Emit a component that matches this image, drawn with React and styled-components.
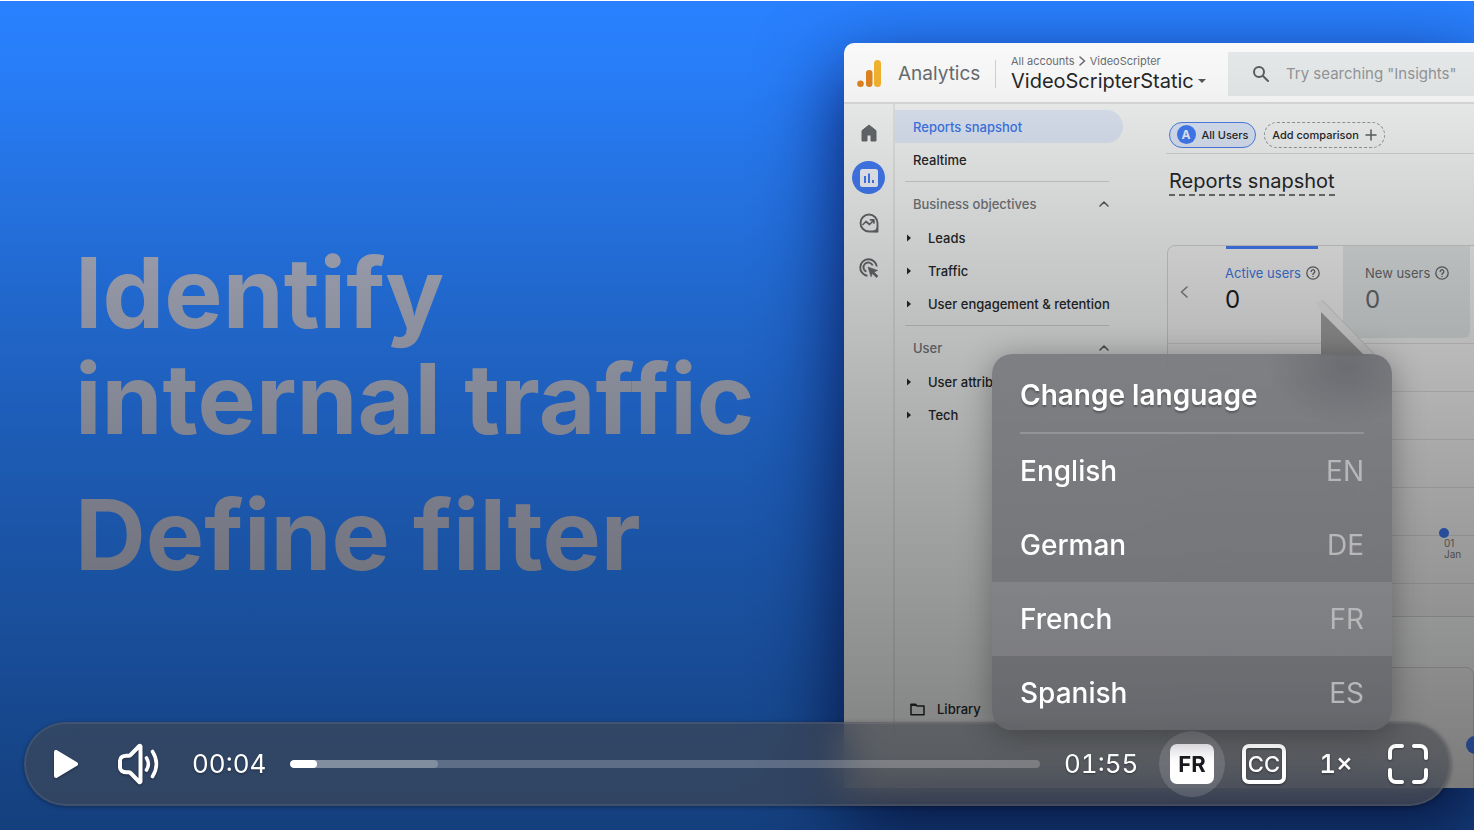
import React from 'react';
import styled, { createGlobalStyle } from 'styled-components';

const GlobalStyle = createGlobalStyle`
  * { box-sizing: border-box; }
  body { margin: 0; background: #fff; font-family: Inter, "Liberation Sans", sans-serif; }
  button { font: inherit; color: inherit; background: none; border: 0; padding: 0; margin: 0; cursor: pointer; }
  h1, h2, p, ul { margin: 0; padding: 0; font-weight: inherit; list-style: none; }
  a { color: inherit; text-decoration: none; }
  svg { display: block; flex: none; }
`;

/* ---------- player shell ---------- */
const Player = styled.main`
  position: relative;
  width: calc(100% - 4px);
  margin-top: 1px;
  aspect-ratio: 16 / 9;
  overflow: hidden;
`;

const Scene = styled.section`
  display: grid;
  grid-template-columns: 844fr 630fr;
  height: 100%;
  padding-top: 42px;
  overflow: hidden;
  background: #2981ff;
  &::after {
    content: '';
    position: absolute;
    inset: 0;
    pointer-events: none;
    background: linear-gradient(180deg, rgba(0,0,0,0) 0%, rgba(0,0,0,0.03) 9%, rgba(0,0,0,0.1) 20%,
      rgba(0,0,0,0.2) 36%, rgba(0,0,0,0.3) 55%, rgba(0,0,0,0.37) 70%, rgba(0,0,0,0.44) 85%, rgba(0,0,0,0.51) 100%);
  }
`;

const Headline = styled.h1`
  padding: 197px 0 0 75px;
  font-weight: 700;
  font-size: 98px;
  line-height: 106px;
  color: #b4b8ca;
  white-space: nowrap;
`;
const HeadlineLine = styled.span`
  display: block;
  margin-top: ${(p) => (p.$gap ? '30px' : '0')};
`;

/* ---------- analytics window ---------- */
const Window = styled.article`
  display: flex;
  flex-direction: column;
  height: 745px;
  min-width: 0;
  overflow: hidden;
  border-top-left-radius: 10px;
  background: #fdfdfd;
  color: #26282a;
  white-space: nowrap;
`;
const WindowShadow = styled.div`
  min-width: 0;
  height: 745px;
  border-radius: 10px;
  box-shadow: 0 30px 80px 4px rgba(0, 0, 64, 0.75);
`;
const TopBar = styled.header`
  display: flex;
  align-items: center;
  height: 61px;
  flex: none;
  padding: 2px 0 0 12px;
  border-bottom: 2px solid #dedede;
`;
const Brand = styled.span`
  width: 98px;
  margin-left: 16px;
  font-size: 19px;
  line-height: 28px;
  color: #696c70;
  border-right: 1px solid #d4d4d4;
`;
const Account = styled.div`
  width: 217px;
  padding-left: 15px;
`;
const Crumbs = styled.p`
  display: flex;
  align-items: center;
  gap: 4px;
  font-size: 11px;
  line-height: 14px;
  color: #6c6f73;
`;
const Property = styled.button`
  display: flex;
  align-items: center;
  gap: 4px;
  font-size: 20px;
  line-height: 26px;
`;
const SearchBox = styled.label`
  display: flex;
  align-items: center;
  gap: 16px;
  flex: 1;
  min-width: 0;
  height: 44px;
  margin-left: 15px;
  padding-left: 24px;
  background: #e9ecec;
  color: #5b5e62;
`;
const SearchInput = styled.input`
  flex: 1;
  min-width: 0;
  border: 0;
  padding: 0;
  outline: 0;
  background: none;
  font: 15px/20px Inter, sans-serif;
  &::placeholder { color: #94979a; opacity: 1; }
`;
const WindowBody = styled.div`
  display: flex;
  flex: 1;
  min-height: 0;
  background: #f2f4f3;
`;
const Rail = styled.nav`
  display: flex;
  flex-direction: column;
  align-items: center;
  gap: 12px;
  width: 51px;
  flex: none;
  padding-top: 12px;
  border-right: 2px solid #e2e4e3;
  color: #66696d;
`;
const RailButton = styled.button`
  display: grid;
  place-items: center;
  width: 33px;
  height: 33px;
  border-radius: 50%;
  background: ${(p) => (p.$active ? '#437cf5' : 'none')};
`;
const Side = styled.nav`
  display: flex;
  flex-direction: column;
  width: 228px;
  flex: none;
  padding: 6px 0 71px;
  font-size: 13px;
  font-weight: 500;
`;
const SideLink = styled.a`
  display: flex;
  align-items: center;
  height: 33px;
  flex: none;
  padding-left: 18px;
  border-radius: 0 17px 17px 0;
  color: ${(p) => (p.$active ? '#3d77e8' : 'inherit')};
  background: ${(p) => (p.$active ? '#dde5f4' : 'none')};
`;
const Rule = styled.hr`
  width: 204px;
  flex: none;
  margin: 5px 0 5px 10px;
  border: 0;
  border-top: 1px solid #cfd1d0;
`;
const Group = styled.button`
  display: flex;
  align-items: center;
  justify-content: space-between;
  height: 34px;
  flex: none;
  padding: 0 14px 0 18px;
  color: #73767a;
`;
const TreeItem = styled.button`
  display: flex;
  align-items: center;
  gap: 17px;
  height: 33px;
  flex: none;
  padding-left: 12px;
`;
const Library = styled.a`
  display: flex;
  align-items: center;
  gap: 12px;
  margin-top: auto;
  padding-left: 15px;
`;
const Report = styled.div`
  flex: 1;
  min-width: 0;
  padding: 0 0 0 43px;
`;
const Chips = styled.div`
  display: flex;
  align-items: center;
  gap: 8px;
  height: 50px;
  padding: 12px 0 0 3px;
  border-bottom: 1px solid #d5d7d6;
  font-size: 11px;
  font-weight: 500;
`;
const Chip = styled.button`
  display: flex;
  align-items: center;
  justify-content: center;
  gap: 6px;
  width: ${(p) => (p.$dashed ? '121px' : '87px')};
  height: 26px;
  border-radius: 13px;
  border: ${(p) => (p.$dashed ? '1px dashed #95989b' : '1px solid #4c80e8')};
  background: ${(p) => (p.$dashed ? 'none' : '#dce5f6')};
`;
const Avatar = styled.span`
  width: 19px;
  height: 19px;
  border-radius: 50%;
  background: #437cf5;
  color: #e9effc;
  font-size: 12px;
  font-weight: 700;
  line-height: 19px;
`;
const ReportTitle = styled.h2`
  display: inline-block;
  margin: 15px 0 0 3px;
  border-bottom: 2px dashed #6e7174;
  font-size: 20px;
  line-height: 25px;
`;
const Card = styled.section`
  height: 372px;
  margin: 49px -8px 0 1px;
  border: 1px solid #d1d1d1;
  border-radius: 8px;
  background: linear-gradient(#f2f2f2, #eeeeee);
`;
const Metrics = styled.div`
  display: flex;
  height: 92px;
  align-items: stretch;
`;
const Prev = styled.button`
  width: 32px;
  flex: none;
  display: grid;
  place-items: center;
  color: #7f8285;
`;
const Metric = styled.div`
  flex: none;
  width: ${(p) => (p.$muted ? '127px' : '143px')};
  padding: 15px 0 0 ${(p) => (p.$muted ? '22px' : '25px')};
  border-radius: ${(p) => (p.$muted ? '0 0 6px 0' : '0')};
  font-size: 13px;
  line-height: 24px;
  color: ${(p) => (p.$muted ? '#66696b' : '#3d77e0')};
  background: ${(p) => (p.$muted ? '#dee2e3' : 'linear-gradient(#437cf5,#437cf5) 26px 0 / 92px 3px no-repeat')};
`;
const MetricName = styled.p`
  display: flex;
  align-items: center;
  gap: 5px;
  svg { color: #626466; }
`;
const MetricValue = styled.p`
  font-size: 24px;
  line-height: 30px;
  color: ${(p) => (p.$muted ? '#66696b' : '#1c1d1e')};
`;
const Chart = styled.div`
  position: relative;
  height: 272px;
  margin-top: 5px;
  background: repeating-linear-gradient(#d9d9d9 0 1px, transparent 1px 48px);
`;
const Callout = styled.svg`
  position: absolute;
  left: 148px;
  top: -45px;
`;
const Tick = styled.div`
  position: absolute;
  right: 18px;
  top: 191px;
  width: 24px;
  padding-left: 5px;
  font-size: 10px;
  line-height: 11px;
  color: #77797b;
  white-space: pre-line;
`;
const Dot = styled.span`
  display: block;
  width: 10px;
  height: 10px;
  margin: -6px 0 0 -5px;
  border-radius: 50%;
  background: #3c74ea;
`;
const LowerCard = styled.section`
  display: flex;
  justify-content: flex-end;
  height: 140px;
  margin: 50px 0 0 1px;
  padding-top: 68px;
  border: 1px solid #d1d1d1;
  border-radius: 8px;
  background: #f0f0f0;
`;
const Badge = styled.span`
  width: 18px;
  height: 18px;
  margin-right: -11px;
  border-radius: 50%;
  background: #437cf5;
`;

/* ---------- control bar ---------- */
const ControlBar = styled.div`
  position: absolute;
  left: 24px;
  right: 23px;
  bottom: 24px;
  display: flex;
  align-items: center;
  height: 84px;
  padding: 0 8px 0 22px;
  border-radius: 42px;
  border: 2px solid rgba(255, 255, 255, 0.07);
  background: rgba(68, 71, 79, 0.6);
  backdrop-filter: blur(20px);
  box-shadow: 0 1px 4px rgba(0, 0, 0, 0.35);
  color: #fff;
`;
const IconButton = styled.button`
  display: grid;
  place-items: center;
  width: ${(p) => p.$w || 66}px;
  height: 66px;
  flex: none;
  border-radius: 33px;
  background: ${(p) => (p.$active ? 'rgba(255,255,255,0.14)' : 'none')};
  filter: ${(p) => (p.$active ? 'none' : 'drop-shadow(0 1px 1px rgba(0, 0, 0, 0.4))')};
`;
const Options = styled.div`
  display: flex;
  gap: 6px;
  flex: none;
  margin-left: 19px;
`;
const Time = styled.time`
  width: 76px;
  flex: none;
  font-size: 26px;
  font-variant-numeric: tabular-nums;
  line-height: 32px;
  text-shadow: 0 1px 2px rgba(0, 0, 0, 0.4);
`;
const Track = styled.div`
  flex: 1;
  min-width: 0;
  display: flex;
  height: 8px;
  margin: 0 24px 0 22px;
  border-radius: 4px;
  overflow: hidden;
  background: rgba(255, 255, 255, 0.22);
`;
const Buffered = styled.div`
  border-radius: 4px;
  background: rgba(255, 255, 255, 0.22);
`;
const Played = styled.div`
  height: 8px;
  border-radius: 4px;
  background: #fff;
`;
const LangTile = styled.span`
  width: 44px;
  height: 40px;
  border-radius: 7px;
  background: linear-gradient(#eceaee, #fff 40%);
  color: #1b1b1d;
  font-size: 22px;
  font-weight: 700;
  line-height: 41px;
`;
const CaptionTile = styled.span`
  width: 44px;
  height: 40px;
  border: 4px solid #fff;
  border-radius: 7px;
  font-size: 22px;
  font-weight: 500;
  line-height: 33px;
  display: flex;
  justify-content: center;
`;
const Rate = styled.span`
  font-size: 26px;
  font-weight: 500;
  font-variant-numeric: tabular-nums;
  line-height: 32px;
`;

/* ---------- language menu ---------- */
const Menu = styled.section`
  position: absolute;
  right: 82px;
  bottom: 100px;
  width: 400px;
  border-radius: 20px;
  overflow: hidden;
  background:
    radial-gradient(ellipse 80px 60px at 355px 12px, rgba(80, 81, 86, 0.4), rgba(80, 81, 86, 0)),
    linear-gradient(rgba(114, 115, 120, 0.82), rgba(110, 111, 116, 0.84) 60%, rgba(98, 99, 104, 0.86));
  backdrop-filter: blur(24px);
  color: #fff;
  text-shadow: 0 1px 1px rgba(0, 0, 0, 0.2);
`;
const MenuShadow = styled.div`
  position: absolute;
  right: 82px;
  bottom: 100px;
  width: 400px;
  height: 376px;
  border-radius: 20px;
  box-shadow: 0 4px 32px rgba(0, 0, 0, 0.32);
`;
const MenuTitle = styled.h2`
  height: 80px;
  margin: 0 28px;
  border-bottom: 2px solid rgba(255, 255, 255, 0.18);
  font-size: 28px;
  font-weight: 600;
  line-height: 82px;
  text-shadow: 0 2px 2px rgba(0, 0, 0, 0.3);
`;
const MenuItem = styled.button`
  display: flex;
  align-items: center;
  justify-content: space-between;
  width: 100%;
  height: 74px;
  padding: 0 28px;
  font-size: 28px;
  font-weight: 500;
  background: ${(p) => (p.$active ? 'rgba(255,255,255,0.1)' : 'none')};
`;
const Code = styled.span`
  font-weight: 400;
  color: #b7b7b8;
`;

/* ---------- icons ---------- */
const stroke = { fill: 'none', stroke: 'currentColor', strokeLinecap: 'round', strokeLinejoin: 'round' };

const Logo = () => (
  <svg width="26" height="30" viewBox="0 0 26 30">
    <circle cx="4.500" cy="24.800" r="3.300" fill="#e28420" />
    <rect x="10" y="11" width="6.500" height="17" rx="3.200" fill="#e28420" />
    <rect x="18" y="1" width="7" height="27" rx="3.500" fill="#f5b52e" />
  </svg>
);
const HomeIcon = () => (
  <svg width="16" height="18" viewBox="0 0 16 18"><path d="M1 6.600 8 1l7 5.600V17h-5v-6H6v6H1z" fill="currentColor" stroke="currentColor" strokeLinejoin="round" /></svg>
);
const ReportsIcon = () => (
  <svg width="18" height="18" viewBox="0 0 18 18">
    <rect width="18" height="18" rx="2.500" fill="#f1f4fb" />
    <path d="M5 7v7M9 4.500V14M13 11v3" stroke="#437cf5" strokeWidth="2" />
  </svg>
);
const ExploreIcon = () => (
  <svg width="20" height="20" viewBox="0 0 20 20" {...stroke} strokeWidth="1.900">
    <path d="M10 18.500A8.500 8.500 0 1 1 18.500 10v8.500z" />
    <path d="m4 11.500 3-3 3.500 3 4-4M11.500 6.800h3.400v3.200" strokeWidth="1.700" />
    <path d="M14 18.500a6 6 0 0 0 4.500-4.500v4.500z" fill="currentColor" strokeWidth="1" />
  </svg>
);
const TargetIcon = () => (
  <svg width="20" height="20" viewBox="0 0 20 20" {...stroke} strokeWidth="1.900" strokeLinecap="butt">
    <path d="M8.500 17.800A8.300 8.300 0 1 1 17.800 8.500" />
    <path d="M7.400 13.700A4.800 4.800 0 1 1 13.700 7.400" />
    <path d="m9 9 9.600 3.400-3.600 1.600 4 4-1.600 1.600-4-4-1.400 3.200z" fill="currentColor" strokeWidth=".6" />
  </svg>
);
const SearchIcon = () => (
  <svg width="18" height="18" viewBox="0 0 18 18" {...stroke} strokeWidth="2"><circle cx="7" cy="7" r="5" /><path d="m11 11 5 5" /></svg>
);
const ChevronUp = () => (
  <svg width="10" height="8" viewBox="0 0 10 8" {...stroke} strokeWidth="1.600" color="#5d6062"><path d="m1 6 4-4 4 4" /></svg>
);
const ChevronRight = () => (
  <svg width="7" height="10" viewBox="0 0 7 10" {...stroke} strokeWidth="1.600"><path d="m1 1 4.500 4L1 9" /></svg>
);
const ChevronLeft = () => (
  <svg width="8" height="12" viewBox="0 0 8 12" {...stroke} strokeWidth="1.600"><path d="M7 1 1.500 6 7 11" /></svg>
);
const Caret = () => (
  <svg width="4" height="8" viewBox="0 0 4 8"><path d="M0 0.500 4 4 0 7.500z" fill="currentColor" /></svg>
);
const DownCaret = () => (
  <svg width="8" height="4" viewBox="0 0 8 4"><path d="M0 0h8L4 4z" fill="#55585b" /></svg>
);
const PlusIcon = () => (
  <svg width="12" height="12" viewBox="0 0 12 12" {...stroke} strokeWidth="1.500" color="#5d6062"><path d="M6 1v10M1 6h10" /></svg>
);
const HelpIcon = () => (
  <svg width="14" height="14" viewBox="0 0 14 14" {...stroke} strokeWidth="1.300">
    <circle cx="7" cy="7" r="6.200" />
    <path d="M5.200 5.500a1.800 1.800 0 1 1 2.700 1.600c-.7.400-.9.700-.9 1.300M7 10.300v.1" />
  </svg>
);
const FolderIcon = () => (
  <svg width="15" height="13" viewBox="0 0 15 13" {...stroke} strokeWidth="1.500"><path d="M1 1.200h4.500L7 3h7v8.800H1z" /><path d="M1 2.200h5" /></svg>
);
const PlayIcon = () => (
  <svg width="26" height="30" viewBox="0 0 26 30"><path d="M3 3v24L23 15z" fill="#fff" stroke="#fff" strokeWidth="4" strokeLinejoin="round" /></svg>
);
const VolumeIcon = () => (
  <svg width="42" height="42" viewBox="0 0 42 42" {...stroke} strokeWidth="4">
    <path d="M23.500 3.500v35c0 .7-.7 1-1.200.5L13.500 30c-.6-.6-1.200-.8-2-.8H9.500C6 29.200 3 27.500 3 24.500v-7c0-3 3-4.700 6.500-4.700h2c.8 0 1.400-.2 2-.8L22.300 3c.5-.5 1.200-.2 1.200.5z" />
    <path d="M29.500 15c2.500 4 2.500 8 0 12M35.500 8.500c5.200 8.300 5.200 16.700 0 25" strokeWidth="3.600" />
  </svg>
);
const FullscreenIcon = () => (
  <svg width="40" height="40" viewBox="0 0 40 40" {...stroke} strokeWidth="4">
    <path d="M14 2H8a6 6 0 0 0-6 6v6M26 2h6a6 6 0 0 1 6 6v6M38 26v6a6 6 0 0 1-6 6h-6M14 38H8a6 6 0 0 1-6-6v-6" />
  </svg>
);

const languages = [
  ['English', 'EN'],
  ['German', 'DE'],
  ['French', 'FR'],
  ['Spanish', 'ES'],
];

function AnalyticsWindow() {
  return (
    <Window>
      <TopBar>
        <Logo />
        <Brand>Analytics</Brand>
        <Account>
          <Crumbs>All accounts <ChevronRight /> VideoScripter</Crumbs>
          <Property>VideoScripterStatic <DownCaret /></Property>
        </Account>
        <SearchBox>
          <SearchIcon />
          <SearchInput type="search" aria-label="Search" placeholder={'Try searching "Insights"'} />
        </SearchBox>
      </TopBar>
      <WindowBody>
        <Rail aria-label="Sections">
          <RailButton aria-label="Home"><HomeIcon /></RailButton>
          <RailButton aria-label="Reports" $active><ReportsIcon /></RailButton>
          <RailButton aria-label="Explore"><ExploreIcon /></RailButton>
          <RailButton aria-label="Advertising"><TargetIcon /></RailButton>
        </Rail>
        <Side aria-label="Reports">
          <SideLink href="#snapshot" $active>Reports snapshot</SideLink>
          <SideLink href="#realtime">Realtime</SideLink>
          <Rule />
          <Group>Business objectives <ChevronUp /></Group>
          <TreeItem><Caret /> Leads</TreeItem>
          <TreeItem><Caret /> Traffic</TreeItem>
          <TreeItem><Caret /> User engagement &amp; retention</TreeItem>
          <Rule />
          <Group>User <ChevronUp /></Group>
          <TreeItem><Caret /> User attrib</TreeItem>
          <TreeItem><Caret /> Tech</TreeItem>
          <Library href="#library"><FolderIcon /> Library</Library>
        </Side>
        <Report>
          <Chips>
            <Chip><Avatar>A</Avatar> All Users</Chip>
            <Chip $dashed>Add comparison <PlusIcon /></Chip>
          </Chips>
          <ReportTitle>Reports snapshot</ReportTitle>
          <Card>
            <Metrics>
              <Prev aria-label="Previous metric"><ChevronLeft /></Prev>
              <Metric>
                <MetricName>Active users <HelpIcon /></MetricName>
                <MetricValue>0</MetricValue>
              </Metric>
              <Metric $muted>
                <MetricName>New users <HelpIcon /></MetricName>
                <MetricValue $muted>0</MetricValue>
              </Metric>
            </Metrics>
            <Chart>
              <Callout width="80" height="62" viewBox="0 0 80 62">
                <path d="M0 4 6 2 62 60H47L5 14z" fill="#ebebeb" />
                <path d="M6 2 62 60" stroke="#cfcfcf" strokeWidth="1" />
                <path d="M5 14v44h44z" fill="#a2a2a2" />
              </Callout>
              <Tick><Dot />{'01\nJan'}</Tick>
            </Chart>
          </Card>
          <LowerCard><Badge /></LowerCard>
        </Report>
      </WindowBody>
    </Window>
  );
}

export default function App() {
  return (
    <>
      <GlobalStyle />
      <Player>
        <Scene>
          <Headline>
            <HeadlineLine>Identify</HeadlineLine>
            <HeadlineLine>internal traffic</HeadlineLine>
            <HeadlineLine $gap>Define filter</HeadlineLine>
          </Headline>
          <WindowShadow><AnalyticsWindow /></WindowShadow>
        </Scene>
        <ControlBar>
          <IconButton $w={36} aria-label="Play"><PlayIcon /></IconButton>
          <IconButton $w={108} aria-label="Volume"><VolumeIcon /></IconButton>
          <Time>00:04</Time>
          <Track>
            <Buffered style={{ width: '19.7%' }}><Played style={{ width: '18.2%' }} /></Buffered>
          </Track>
          <Time>01:55</Time>
          <Options>
            <IconButton $active aria-label="Language"><LangTile>FR</LangTile></IconButton>
            <IconButton aria-label="Captions"><CaptionTile>CC</CaptionTile></IconButton>
            <IconButton aria-label="Playback speed"><Rate>1×</Rate></IconButton>
            <IconButton aria-label="Fullscreen"><FullscreenIcon /></IconButton>
          </Options>
        </ControlBar>
        <MenuShadow />
        <Menu aria-label="Change language">
          <MenuTitle>Change language</MenuTitle>
          {languages.map(([name, code]) => (
            <MenuItem key={code} $active={code === 'FR'}>{name}<Code>{code}</Code></MenuItem>
          ))}
        </Menu>
      </Player>
    </>
  );
}
